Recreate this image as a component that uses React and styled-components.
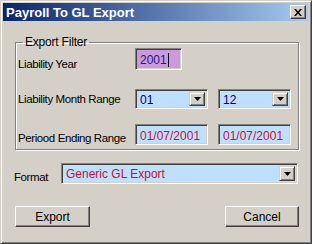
import React from 'react'
import styled, { createGlobalStyle } from 'styled-components'

const GlobalStyle = createGlobalStyle`
    html, body {
        margin: 0;
        padding: 0;
        background: #d4d0c8;
    }
    body {
        font-family: "Liberation Sans", Arial, sans-serif;
        font-size: 11px;
        color: #000;
    }
`

const Window = styled.div`
    box-sizing: border-box;
    width: 312px;
    height: 244px;
    background: #d4d0c8;
    border-top: 1px solid #d4d0c8;
    border-left: 1px solid #d4d0c8;
    border-right: 1px solid #404040;
    border-bottom: 1px solid #404040;
    box-shadow: inset 1px 1px 0 #fff, inset -1px -1px 0 #808080;
    padding: 2px 3px 3px 2px;
    display: flex;
    flex-direction: column;
`

const TitleBar = styled.div`
    height: 18px;
    flex-shrink: 0;
    display: flex;
    align-items: center;
    justify-content: space-between;
    padding: 0 2px 0 3px;
    background: linear-gradient(to right, #0a246a, #a6caf0);
`

const Title = styled.span`
    color: #fff;
    font-weight: bold;
    font-size: 13px;
`

const CloseBtn = styled.div`
    box-sizing: border-box;
    width: 16px;
    height: 14px;
    background: #d4d0c8;
    border-top: 1px solid #fff;
    border-left: 1px solid #fff;
    border-right: 1px solid #404040;
    border-bottom: 1px solid #404040;
    box-shadow: inset -1px -1px 0 #808080;
    display: flex;
    align-items: center;
    justify-content: center;
`

const Content = styled.div`
    flex: 1;
    display: flex;
    flex-direction: column;
    padding: 0 9px 0 11px;
`

const Group = styled.fieldset`
    margin: 15px 0 0 1px;
    padding: 0 0 0 2px;
    height: 114px;
    flex-shrink: 0;
    box-sizing: border-box;
    border: 1px solid #808080;
    box-shadow: 1px 1px 0 #fff, inset 1px 1px 0 #fff;
    legend {
        margin-left: 5px;
        padding: 0 2px;
        font-size: 12px;
        line-height: 12px;
        letter-spacing: -0.2px;
    }
`

const Row = styled.div`
    display: flex;
    align-items: ${p => p.$align || 'center'};
    margin-top: ${p => p.$top}px;
    flex-shrink: 0;
`

const Label = styled.div`
    width: ${p => p.$w || 117}px;
    padding-top: ${p => p.$drop || 0}px;
    font-size: 11.5px;
    letter-spacing: -0.4px;
    white-space: nowrap;
`

const sunken = `
    box-sizing: border-box;
    border-top: 1px solid #808080;
    border-left: 1px solid #808080;
    border-right: 1px solid #fff;
    border-bottom: 1px solid #fff;
    box-shadow: inset 1px 1px 0 #404040, inset -1px -1px 0 #d4d0c8;
`

const Field = styled.div`
    ${sunken}
    flex-shrink: 0;
    width: ${p => p.$w}px;
    height: ${p => p.$h || 21}px;
    background: ${p => p.$bg || '#bfdfff'};
    color: ${p => p.$color || '#000080'};
    padding: 4px 0 0 4px;
    font-size: 12px;
    line-height: 14px;
    margin-right: ${p => p.$gap || 0}px;
    display: flex;
    align-items: flex-start;
`

const Caret = styled.span`
    display: inline-block;
    width: 1px;
    height: 14px;
    margin-left: 1px;
    background: #000;
`

const Combo = styled.div`
    ${sunken}
    flex-shrink: 0;
    width: ${p => p.$w}px;
    height: ${p => p.$h || 20}px;
    background: #bfdfff;
    color: ${p => p.$color || '#000080'};
    margin-right: ${p => p.$gap || 0}px;
    display: flex;
    align-items: stretch;
    padding: 2px;
`

const ComboText = styled.div`
    flex: 1;
    padding: 1px 0 0 2px;
    font-size: 12px;
    line-height: 14px;
`

const DropBtn = styled.div`
    box-sizing: border-box;
    width: 16px;
    background: #d4d0c8;
    border-top: 1px solid #d4d0c8;
    border-left: 1px solid #d4d0c8;
    border-right: 1px solid #404040;
    border-bottom: 1px solid #404040;
    box-shadow: inset 1px 1px 0 #fff, inset -1px -1px 0 #808080;
    display: flex;
    align-items: center;
    justify-content: center;
`

const Buttons = styled.div`
    display: flex;
    justify-content: space-between;
    margin-top: 22px;
`

const Button = styled.button`
    box-sizing: border-box;
    width: ${p => p.$w || 75}px;
    height: 21px;
    background: #d4d0c8;
    font-family: "Liberation Sans", Arial, sans-serif;
    font-size: 12px;
    color: #000;
    border-top: 1px solid #fff;
    border-left: 1px solid #fff;
    border-right: 1px solid #404040;
    border-bottom: 1px solid #404040;
    box-shadow: inset -1px -1px 0 #808080;
    padding: 0;
    margin: 0 ${p => p.$mr || 0}px 0 ${p => p.$ml || 0}px;
`

const Arrow = () => (
    <svg width="7" height="4" viewBox="0 0 7 4">
        <path d="M0 0h7L3.5 4z" fill="#000" />
    </svg>
)

export default function App() {
    return (
        <>
            <GlobalStyle />
            <Window>
                <TitleBar>
                    <Title>Payroll To GL Export</Title>
                    <CloseBtn>
                        <svg width="8" height="7" viewBox="0 0 8 7">
                            <path d="M0 0h2l2 2.5L6 0h2L5 3.5 8 7H6L4 4.5 2 7H0l3-3.5z" fill="#000" />
                        </svg>
                    </CloseBtn>
                </TitleBar>
                <Content>
                    <Group>
                        <legend>Export Filter</legend>
                        <Row $top={0} $align="flex-start">
                            <Label $drop={10}>Liability Year</Label>
                            <Field $w={47} $h={22} $bg="#cc99dd" $color="#202080">
                                2001<Caret />
                            </Field>
                        </Row>
                        <Row $top={19}>
                            <Label>Liability Month Range</Label>
                            <Combo $w={73} $gap={10}>
                                <ComboText>01</ComboText>
                                <DropBtn><Arrow /></DropBtn>
                            </Combo>
                            <Combo $w={73}>
                                <ComboText>12</ComboText>
                                <DropBtn><Arrow /></DropBtn>
                            </Combo>
                        </Row>
                        <Row $top={15} $align="flex-start">
                            <Label $drop={8}>Periood Ending Range</Label>
                            <Field $w={73} $gap={10} $color="#c8102e">01/07/2001</Field>
                            <Field $w={73} $color="#c8102e">01/07/2001</Field>
                        </Row>
                    </Group>
                    <Row $top={13} $align="flex-start">
                        <Label $w={47} $drop={8}>Format</Label>
                        <Combo $w={237} $h={21} $color="#c8102e">
                            <ComboText>Generic GL Export</ComboText>
                            <DropBtn><Arrow /></DropBtn>
                        </Combo>
                    </Row>
                    <Buttons>
                        <Button $w={75} $ml={1}>Export</Button>
                        <Button $w={74}>Cancel</Button>
                    </Buttons>
                </Content>
            </Window>
        </>
    )
}
